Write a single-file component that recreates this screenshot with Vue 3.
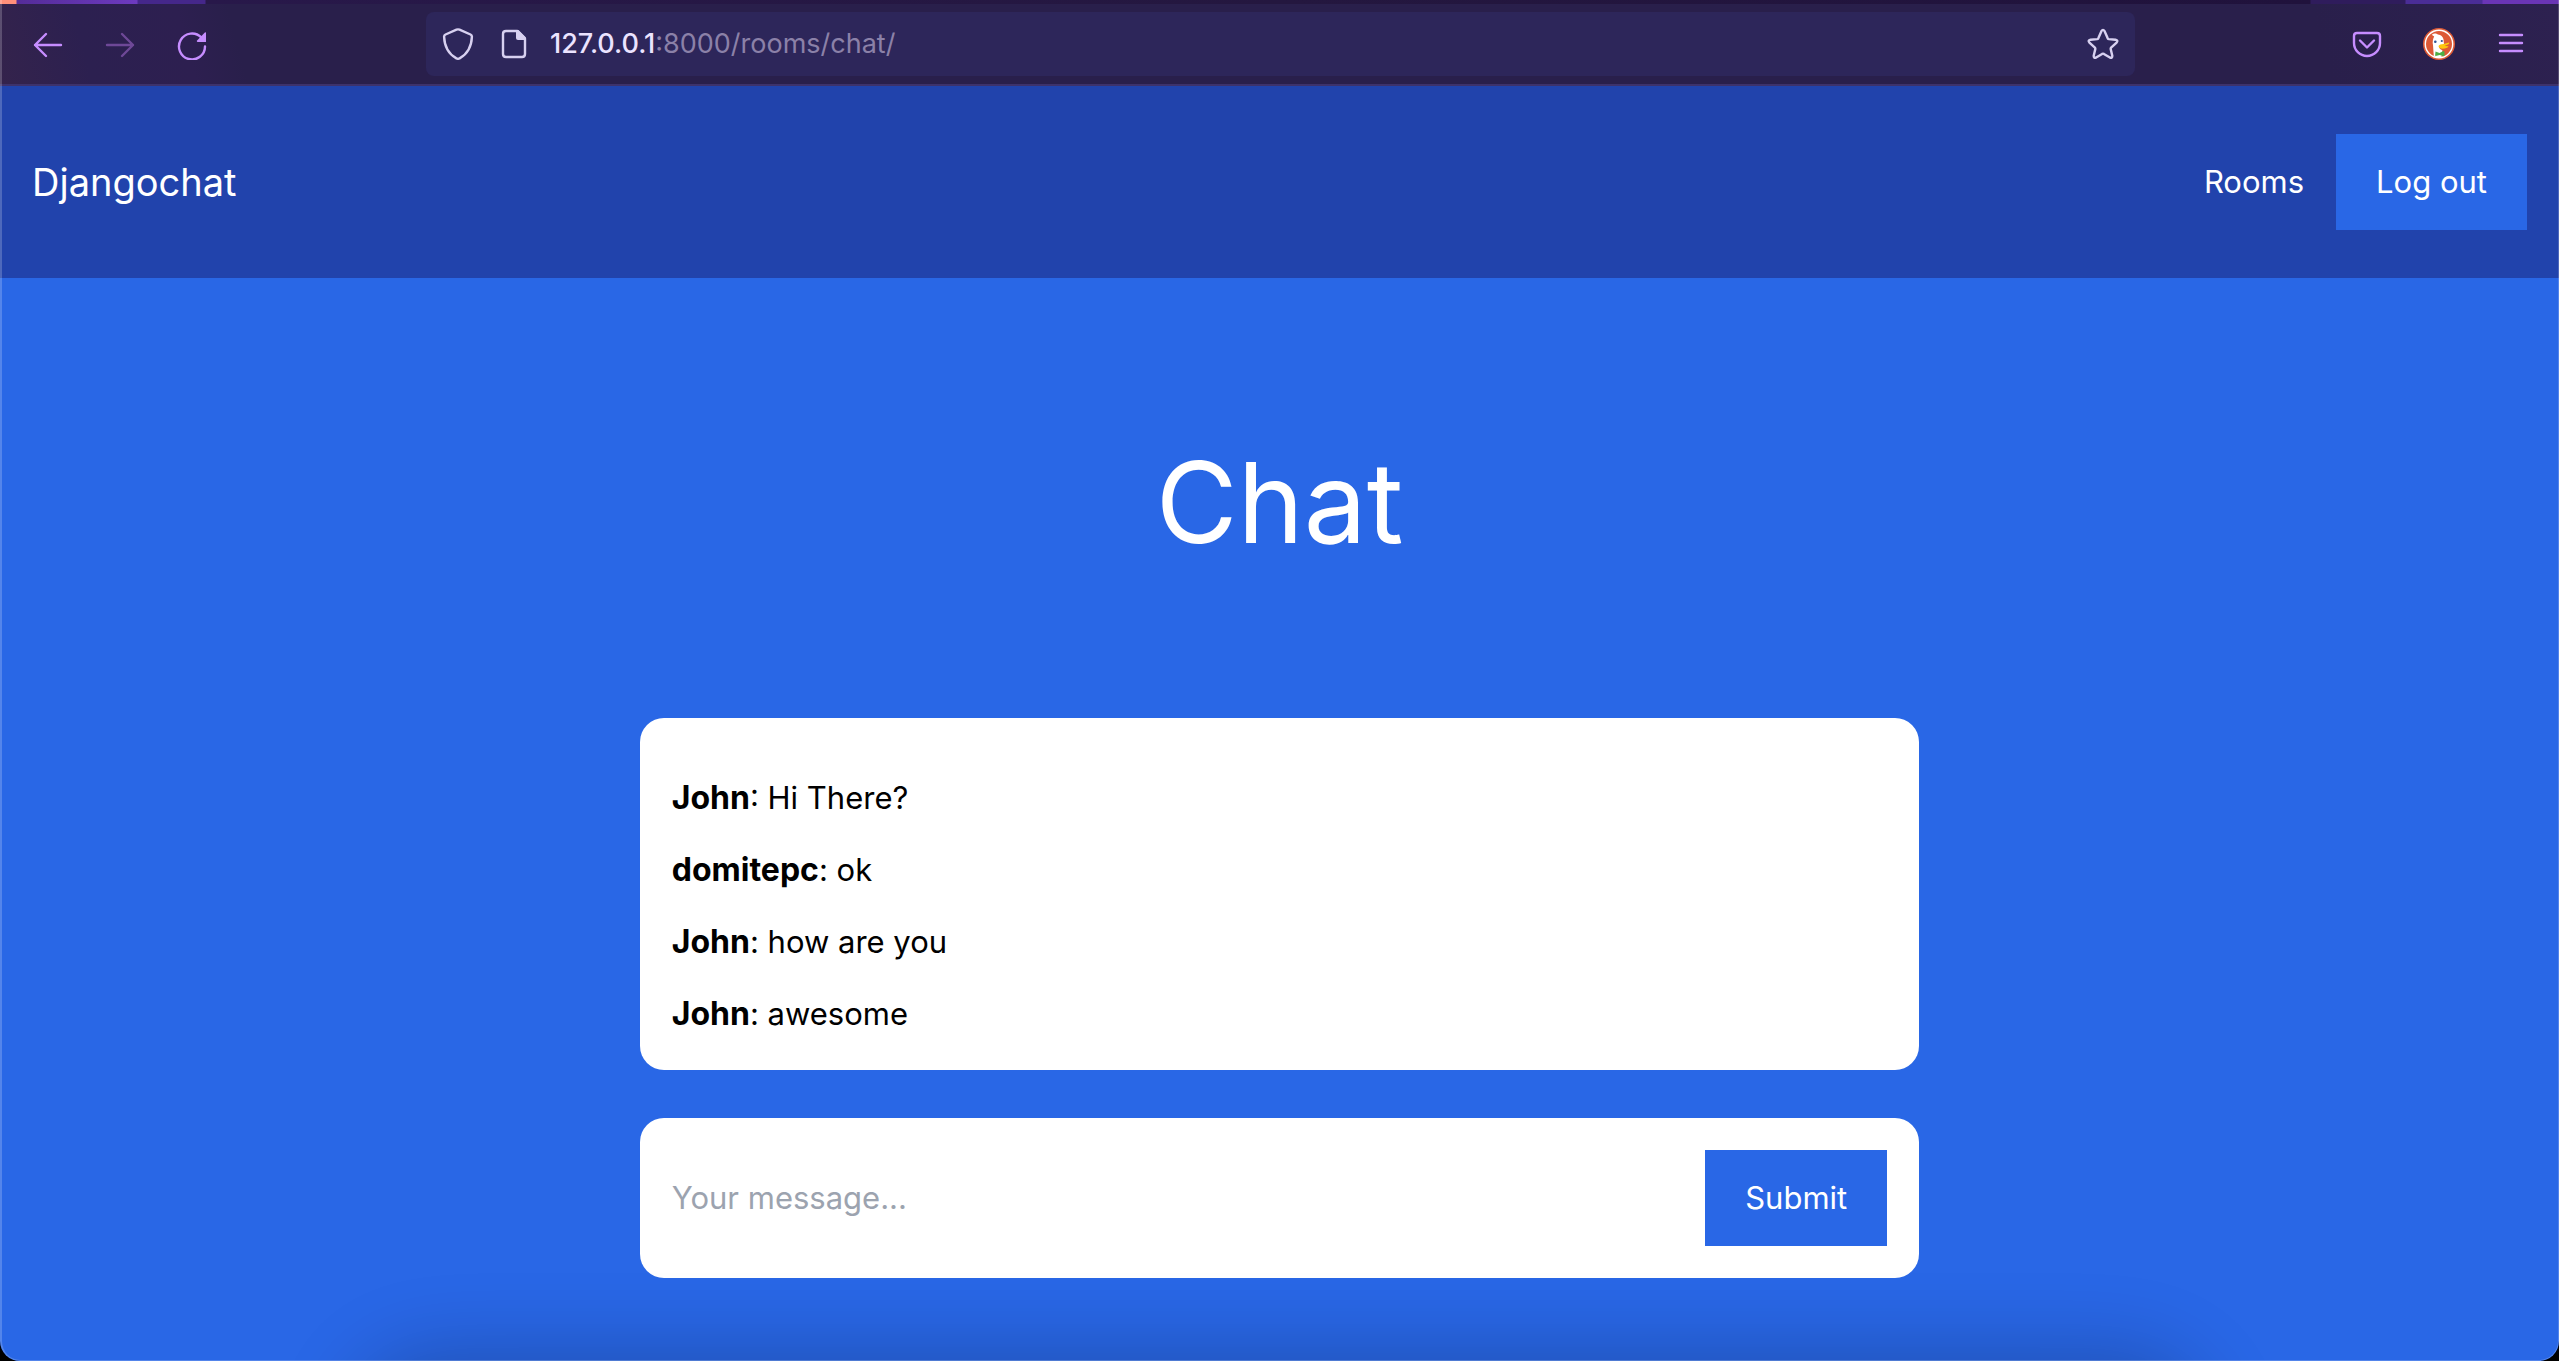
<script setup>
import { ref } from 'vue'

const messages = ref([
  { id: 1, user: 'John', text: 'Hi There?' },
  { id: 2, user: 'domitepc', text: 'ok' },
  { id: 3, user: 'John', text: 'how are you' },
  { id: 4, user: 'John', text: 'awesome' },
])
const draft = ref('')

function send() {
  const text = draft.value.trim()
  if (!text) return
  messages.value.push({ id: Date.now(), user: 'John', text })
  draft.value = ''
}
</script>

<template>
  <div class="desktop">
    <div class="window">
      <div class="tab-strip"></div>

      <div class="toolbar">
        <button class="tool" type="button" aria-label="Back">
          <svg viewBox="0 0 32 32"><path d="M29 17H3M14 6L3 17l11 11" /></svg>
        </button>
        <button class="tool" type="button" aria-label="Forward" disabled>
          <svg viewBox="0 0 32 32"><path d="M3 17h26M18 6l11 11-11 11" /></svg>
        </button>
        <button class="tool" type="button" aria-label="Reload">
          <svg viewBox="0 0 32 32">
            <path d="M25.300 9.400A13 13 0 1 0 29 18.500" />
            <path class="solid" d="M30 4.500v9.500h-8.500q-1.200-.6-.4-1.600L28.600 4.700q.8-.6 1.400-.2z" />
          </svg>
        </button>

        <div class="address">
          <svg class="glyph" viewBox="0 0 32 32"><path d="M14.500 1.700q1.500-.6 3 0L28.500 6.500q1.500.7 1.400 2.300C29.500 20 25.500 26 17.600 30.400q-1.600.8-3.200 0C6.500 26 2.500 20 2.100 8.800Q2 7.200 3.500 6.500z" /></svg>
          <svg class="glyph page" viewBox="0 0 32 32">
            <path d="M8 3h11.500L27 10.500V26q0 3-3 3H8q-3 0-3-3V6q0-3 3-3z" />
            <path class="solid" d="M18 2h2.500L28 9.500V12h-8q-2 0-2-2z" />
          </svg>
          <span class="url"><span class="host">127.0.0.1</span>:8000/rooms/chat/</span>
          <svg class="glyph" viewBox="0 0 32 32"><path d="M14.400 3.200q1.600-2.600 3.200 0l3.100 7.100q.4.700 1.200.8l6.600.6q3 .6 1.100 2.900l-5.500 5q-.6.700-.4 1.500l1.600 6.600q.2 2.700-2.400 1.900l-6-3.700q-.9-.5-1.800 0l-6 3.700q-2.600.8-2.400-1.900l1.600-6.600q.2-.8-.4-1.500l-5.500-5q-1.900-2.300 1.100-2.900l6.600-.6q.8-.1 1.200-.8z" /></svg>
        </div>

        <button class="tool" type="button" aria-label="Save to Pocket">
          <svg viewBox="0 0 32 32"><path d="M6 5h20q3 0 3 3v7a13 13 0 0 1-26 0V8q0-3 3-3zM9 12.500l7 7 7-7" /></svg>
        </button>
        <button class="tool" type="button" aria-label="DuckDuckGo">
          <svg viewBox="0 0 32 32">
            <circle class="solid rust" cx="16" cy="16" r="16" />
            <circle class="ring" cx="16" cy="16" r="13.700" />
            <path class="solid white" d="M9 7q0-2 4-1.500l2 1q4.500.8 5.500 4.800l.6 6q-4.600.6-5.200 1.800.5 2.200 3.500 3.200l-.8 6.500q-4 1-7.800-.6L10 17q-1-5 1.200-8.600z" />
            <circle class="solid navy" cx="12.300" cy="13.800" r="1.300" />
            <circle class="solid navy" cx="18.800" cy="13" r="1.100" />
            <path class="solid yellow" d="M15.500 18q1-2 5-2l5.500-1.500q.8.600-.5 1.700l-4 1.800 3.500.2q1.200.4-.5 1.300-5.500 2.500-8.300 0-.7-.7-.7-1.500z" />
            <path class="solid green" d="M12.500 23.500l4 1.500 4-2 1 .7v4l-1 .6-3.800-1.300-4 1-.6-.6z" />
          </svg>
        </button>
        <button class="tool" type="button" aria-label="Open application menu">
          <svg viewBox="0 0 32 32"><path d="M5 7h22M5 15h22M5 23h22" /></svg>
        </button>
      </div>

      <div class="site">
        <nav class="navbar">
          <a class="brand" href="/">Djangochat</a>
          <div class="links">
            <a class="link" href="/rooms/">Rooms</a>
            <a class="button" href="/logout/">Log out</a>
          </div>
        </nav>

        <main>
          <h1>Chat</h1>
          <section class="card messages">
            <p v-for="message in messages" :key="message.id">
              <strong>{{ message.user }}</strong>: {{ message.text }}
            </p>
          </section>
          <form class="card composer" @submit.prevent="send">
            <input v-model="draft" type="text" name="content" aria-label="Your message" placeholder="Your message..." />
            <button class="button" type="submit">Submit</button>
          </form>
        </main>
      </div>
      <div class="dock-shadow"></div>
    </div>
  </div>
</template>

<style>
body {
  margin: 0;
  background: #000;
}
</style>

<style scoped>
.desktop {
  background: #000;
  font-family: Inter, "Liberation Sans", sans-serif;
  font-size: 31px;
  line-height: 48px;
}

.window {
  position: relative;
  display: flex;
  flex-direction: column;
  min-height: 100vh;
  overflow: hidden;
  border-radius: 0 0 20px 20px;
  background: #2967e6;
}

.window::after {
  content: "";
  position: absolute;
  inset: 0;
  border: solid rgba(255, 255, 255, 0.2);
  border-width: 0 1px 1px 2px;
  border-radius: 0 0 20px 20px;
  pointer-events: none;
}

.tab-strip {
  height: 4px;
  background: linear-gradient(
    90deg,
    #ff8f7a 0 16px,
    #542c98 17px,
    #6d3abf 137px,
    #45278a 138px 205px,
    #28184a 206px,
    #24173f 50%,
    #20123c calc(100% - 249px),
    #2f1c5c calc(100% - 248px) calc(100% - 154px),
    #4a2d96 calc(100% - 153px) calc(100% - 77px),
    #6a35b5 calc(100% - 76px)
  );
}

.toolbar {
  display: flex;
  align-items: center;
  gap: 40px;
  height: 80px;
  padding: 0 32px;
  border-bottom: 2px solid #3d326b;
  background: linear-gradient(75deg, #34234c 0, #2c2050 90px, #2d1f50 190px, #291f4b 240px, #291f4b calc(100% - 240px), #2d2150 100%);
}

.tool {
  flex: none;
  width: 32px;
  height: 32px;
  padding: 0;
  border: 0;
  background: none;
  color: #c68dff;
}

.tool:disabled {
  color: #6e4897;
}

svg {
  display: block;
  width: 32px;
  height: 32px;
  fill: none;
  stroke: currentColor;
  stroke-width: 2.4;
  stroke-linecap: round;
  stroke-linejoin: round;
}

.solid {
  fill: currentColor;
  stroke: none;
}

.ring {
  stroke: #fff;
  stroke-width: 1.4;
}

.rust { fill: #dd5a36; }
.white { fill: #fff; }
.navy { fill: #2f5294; }
.yellow { fill: #fdc70e; }
.green { fill: #4caf45; }

.address {
  display: flex;
  flex: 1;
  align-items: center;
  height: 64px;
  margin: 0 176px 0 178px;
  padding: 0 16px;
  border-radius: 8px;
  background: #2d265a;
  color: #d7d0f0;
}

.glyph {
  flex: none;
}

.page {
  margin: 0 20px 0 24px;
}

.url {
  flex: 1;
  color: #8b81a8;
  font-size: 27px;
}

.host {
  color: #ebe3ff;
  font-weight: 500;
}

.site {
  flex: 1;
}

.navbar {
  display: flex;
  align-items: center;
  justify-content: space-between;
  padding: 48px 32px;
  background: #2143ac;
}

.links {
  display: flex;
  align-items: center;
  gap: 32px;
}

a {
  color: #fff;
  text-decoration: none;
}

.brand {
  font-size: 38px;
}

.button {
  display: block;
  padding: 24px 40px;
  border: 0;
  background: #2967e6;
  color: #fff;
  font: inherit;
}

main {
  width: 50%;
  margin: 0 auto;
  padding-bottom: 80px;
}

h1 {
  margin: 0;
  padding: 160px 0 152px;
  color: #fff;
  font-size: 112px;
  font-weight: 400;
  line-height: 128px;
  text-align: center;
}

.card {
  padding: 32px;
  border-radius: 24px;
  background: #fff;
}

.messages {
  margin-bottom: 48px;
}

.messages p {
  margin: 0;
  padding-top: 24px;
}

.messages strong {
  font-size: 32px;
  font-weight: 700;
}

.composer {
  display: flex;
  align-items: center;
}

.composer input {
  flex: 1;
  min-width: 0;
  padding: 0;
  border: 0;
  outline: 0;
  background: none;
  color: #000;
  font: inherit;
}

.composer input::placeholder {
  color: #9ca3af;
  opacity: 1;
}

.dock-shadow {
  position: absolute;
  top: 100%;
  left: 14%;
  right: 14%;
  height: 160px;
  border-radius: 80px;
  box-shadow: 0 0 80px 8px rgba(0, 0, 0, 0.22);
}
</style>
